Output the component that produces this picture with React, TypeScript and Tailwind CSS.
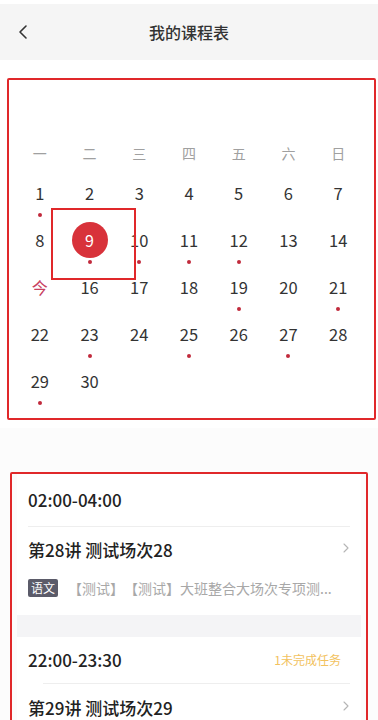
import { ChevronLeft, ChevronRight } from 'lucide-react';

const WEEKDAYS = ['一', '二', '三', '四', '五', '六', '日'];

// 有课的日期（下方红点）
const DOT_DAYS = [1, 9, 10, 11, 12, 19, 21, 23, 25, 27, 29];
const SELECTED = 9;
const TODAY = 15;

const FONT = { fontFamily: '"Noto Sans CJK SC", "Noto Sans", sans-serif' };

function DayCell({ day }: { day: number | null }) {
  if (day === null) return <div className="h-[47px]" />;
  const hasDot = DOT_DAYS.includes(day);
  const isSelected = day === SELECTED;
  const isToday = day === TODAY;

  return (
    <div className="h-[47px] flex flex-col items-center">
      <div className="h-[26px] flex items-center justify-center">
        {isSelected ? (
          <div className="w-9 h-9 -my-[5px] rounded-full bg-[#d8323a] flex items-center justify-center text-[16px] text-white">
            {day}
          </div>
        ) : isToday ? (
          <span className="text-[16px] text-[#c8415f]">今</span>
        ) : (
          <span className="text-[16.5px] text-[#333]">{day}</span>
        )}
      </div>
      {hasDot && <span className="mt-[7px] w-1 h-1 rounded-full bg-[#c12a3c]" />}
    </div>
  );
}

export default function App() {
  const days: (number | null)[] = Array.from({ length: 30 }, (_, i) => i + 1);
  while (days.length < 35) days.push(null);

  return (
    <div className="relative w-[378px] min-h-[720px] bg-[#fcfcfc] overflow-hidden" style={FONT}>
      {/* 顶部 */}
      <div className="h-1 bg-white" />
      <div className="h-14 bg-[#f5f5f5] flex items-center relative">
        <ChevronLeft className="absolute left-[11px] w-6 h-6 text-[#333]" strokeWidth={1.6} />
        <div className="flex-1 text-center text-[16px] font-medium text-[#333]">我的课程表</div>
      </div>

      {/* 日历 */}
      <div className="bg-white pt-[83px] pb-[13px] px-[15px]">
        <div className="grid grid-cols-7 h-5 mb-[17px]">
          {WEEKDAYS.map((w) => (
            <div key={w} className="text-center text-[14px] leading-5 text-[#a0a0a0]">
              {w}
            </div>
          ))}
        </div>
        <div className="grid grid-cols-7">
          {days.map((d, i) => (
            <DayCell key={i} day={d} />
          ))}
        </div>
      </div>

      {/* 课程列表 */}
      <div className="pt-[46px] px-[17px]">
        <div className="bg-white px-[11px]">
          <div className="h-[52px] flex items-center text-[17px] font-medium text-[#222]">02:00-04:00</div>
          <div className="h-px bg-[#eeeeee]" />
          <div className="h-[46px] flex items-center justify-between">
            <span className="text-[17px] font-medium text-[#222]">第28讲 测试场次28</span>
            <ChevronRight className="w-4 h-4 text-[#b5b5b5] -mr-1 -mt-1" strokeWidth={1.6} />
          </div>
          <div className="flex items-center gap-[10px] h-[30px] pb-[12px] box-content">
            <span className="px-[3px] h-[18px] leading-[18px] rounded-[2px] bg-[#5b5b69] text-white text-[12px]">语文</span>
            <span className="text-[14px] text-[#a8a8a8] truncate [text-spacing-trim:space-all]">【测试】【测试】大班整合大场次专项测...</span>
          </div>
        </div>
        <div className="h-[22px] bg-[#f4f4f6]" />
        <div className="bg-white px-[11px]">
          <div className="h-[46px] flex items-center justify-between">
            <span className="text-[17px] font-medium text-[#222]">22:00-23:30</span>
            <span className="text-[12px] text-[#f2c25e] mr-[9px]">1未完成任务</span>
          </div>
          <div className="h-px bg-[#eeeeee] ml-[15px]" />
          <div className="h-[48px] flex items-center justify-between">
            <span className="text-[17px] font-medium text-[#222]">第29讲 测试场次29</span>
            <ChevronRight className="w-4 h-4 text-[#b5b5b5] -mr-1 -mt-1" strokeWidth={1.6} />
          </div>
        </div>
      </div>

      {/* 标注框 */}
      <div className="absolute left-[7px] top-[78px] w-[369px] h-[342px] border-2 border-[#e0282a] rounded-[2px] pointer-events-none" />
      <div className="absolute left-[51px] top-[208px] w-[85px] h-[72px] border-2 border-[#e0282a] pointer-events-none" />
      <div className="absolute left-[10px] top-[472px] w-[358px] h-[260px] border-2 border-[#e0282a] rounded-[2px] pointer-events-none" />
    </div>
  );
}
